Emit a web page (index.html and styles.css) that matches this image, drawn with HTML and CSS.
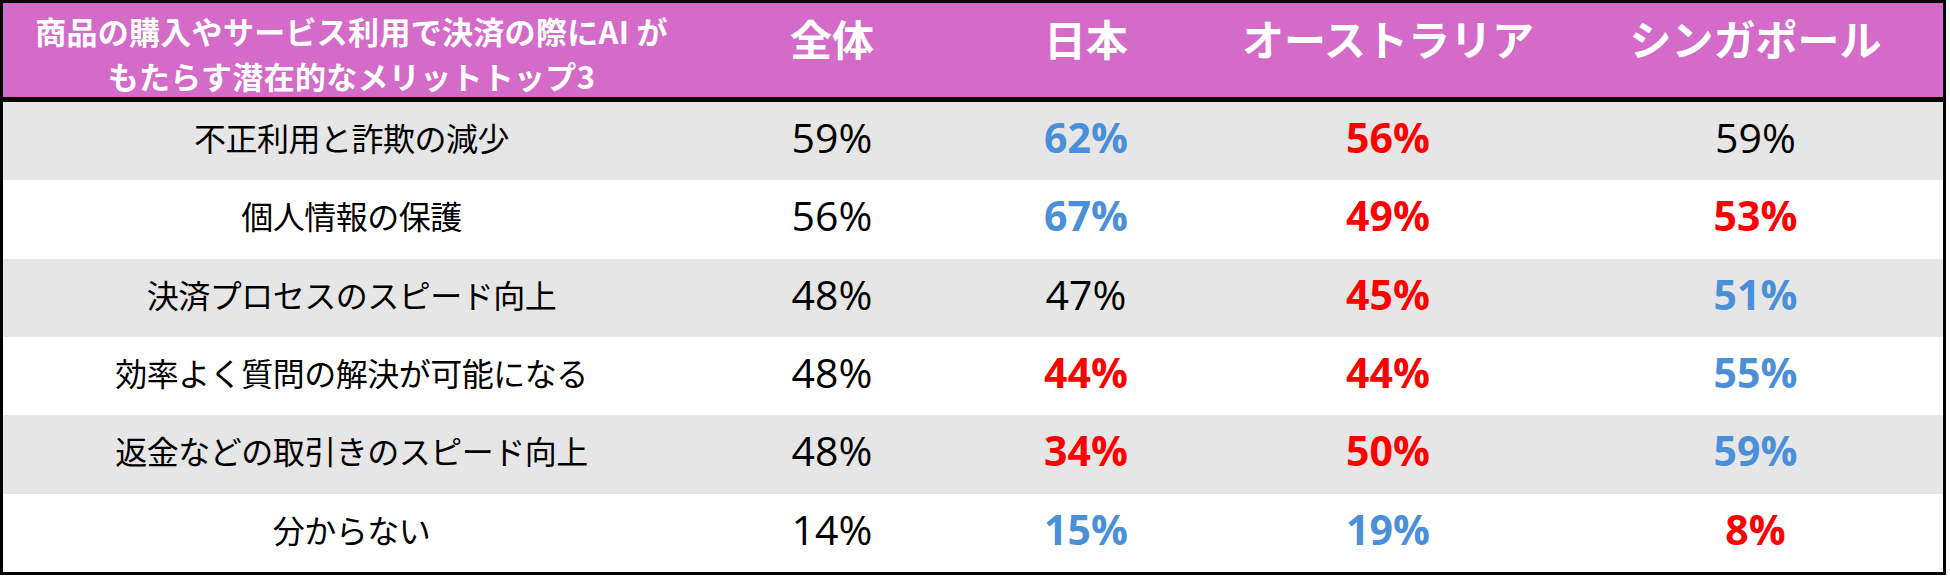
FILE: index.html
```html
<!DOCTYPE html>
<html lang="ja">
<head>
<meta charset="utf-8">
<title>AIがもたらすメリット</title>
<link rel="stylesheet" href="styles.css">
</head>
<body>
<div class="table">
  <div class="head">
    <div class="title">商品の購入やサービス利用で決済の際にAI が<br>もたらす潜在的なメリットトップ3</div>
    <div class="col">全体</div>
    <div class="col">日本</div>
    <div class="col">オーストラリア</div>
    <div class="col">シンガポール</div>
  </div>
  <div class="body">
    <div class="row grey">
      <div class="label">不正利用と詐欺の減少</div>
      <div class="num">59%</div>
      <div class="num blue">62%</div>
      <div class="num red">56%</div>
      <div class="num">59%</div>
    </div>
    <div class="row">
      <div class="label">個人情報の保護</div>
      <div class="num">56%</div>
      <div class="num blue">67%</div>
      <div class="num red">49%</div>
      <div class="num red">53%</div>
    </div>
    <div class="row grey">
      <div class="label">決済プロセスのスピード向上</div>
      <div class="num">48%</div>
      <div class="num">47%</div>
      <div class="num red">45%</div>
      <div class="num blue">51%</div>
    </div>
    <div class="row">
      <div class="label">効率よく質問の解決が可能になる</div>
      <div class="num">48%</div>
      <div class="num red">44%</div>
      <div class="num red">44%</div>
      <div class="num blue">55%</div>
    </div>
    <div class="row grey">
      <div class="label">返金などの取引きのスピード向上</div>
      <div class="num">48%</div>
      <div class="num red">34%</div>
      <div class="num red">50%</div>
      <div class="num blue">59%</div>
    </div>
    <div class="row">
      <div class="label">分からない</div>
      <div class="num">14%</div>
      <div class="num blue">15%</div>
      <div class="num blue">19%</div>
      <div class="num red">8%</div>
    </div>
  </div>
</div>
</body>
</html>
```

FILE: styles.css
```css
* {
  box-sizing: border-box;
}

body {
  margin: 0;
  background: #ffffff;
  font-family: "Noto Sans CJK JP", "Noto Sans", sans-serif;
}

.table {
  width: 1946px;
  height: 575px;
  border: 3px solid #000000;
  display: flex;
  flex-direction: column;
}

.head,
.row {
  display: grid;
  grid-template-columns: 697px 264px 244px 360px 375px;
}

.head {
  height: 99px;
  background: #d46bc8;
  border-bottom: 5px solid #000000;
  color: #ffffff;
}

.title {
  font-size: 31px;
  font-weight: 700;
  line-height: 45px;
  text-align: center;
  padding-top: 5px;
  letter-spacing: 0.3px;
}

.col {
  font-size: 42px;
  font-weight: 700;
  line-height: 50px;
  text-align: center;
  padding-top: 10px;
}

.body {
  flex: 1;
  display: flex;
  flex-direction: column;
}

.row {
  flex: 1;
  background: #ffffff;
  align-items: center;
  padding-bottom: 8px;
}

.row.grey {
  background: #e7e6e6;
}

.label {
  font-size: 32px;
  font-weight: 400;
  text-align: center;
  color: #000000;
  line-height: 40px;
  letter-spacing: -0.5px;
}

.num {
  font-family: "Open Sans", "Noto Sans", sans-serif;
  font-size: 41px;
  font-weight: 400;
  line-height: 44px;
  text-align: center;
  color: #000000;
}

.num.blue {
  color: #4a90d9;
  font-weight: 700;
}

.num.red {
  color: #ff0000;
  font-weight: 700;
}
```
